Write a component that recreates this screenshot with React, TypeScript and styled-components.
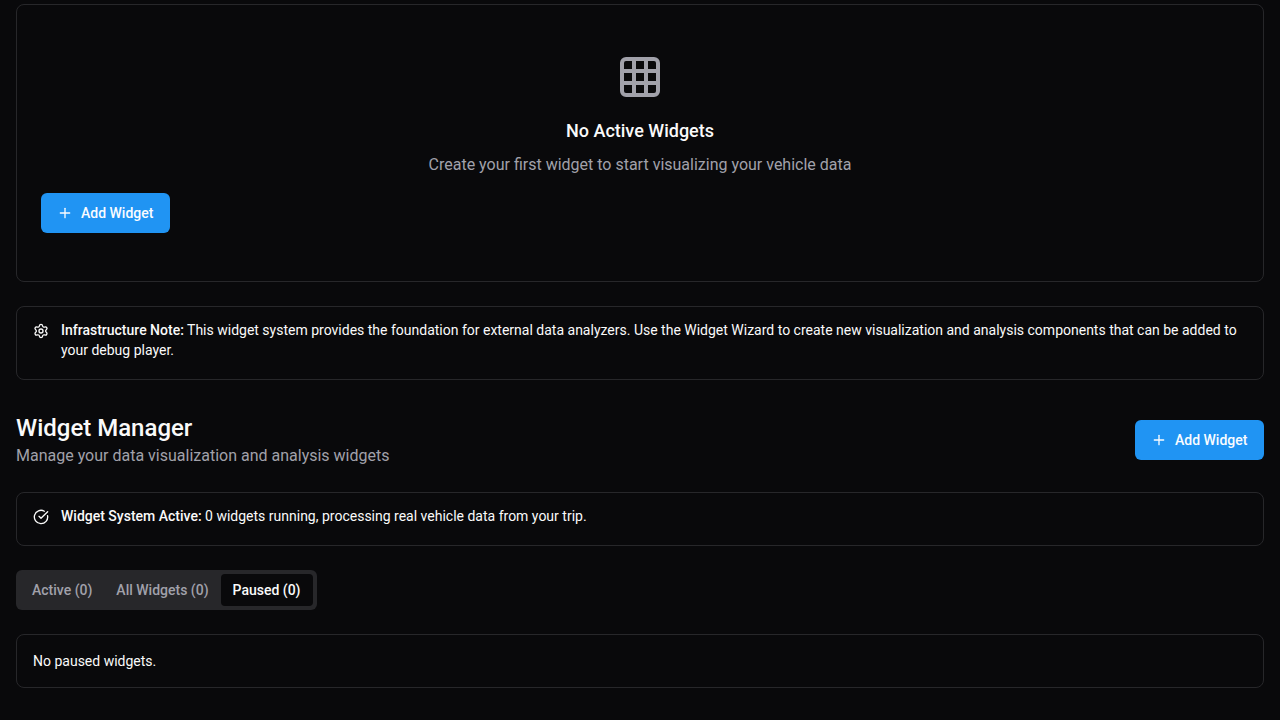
import React, { useState } from "react";
import styled, { createGlobalStyle } from "styled-components";
import { CircleCheckBig, Grid3x3, Plus, Settings } from "lucide-react";

const GlobalStyle = createGlobalStyle`
  *, *::before, *::after { box-sizing: border-box; }
  body {
    margin: 0;
    background: #09090b;
    color: #fafafa;
    font-family: Roboto, "Liberation Sans", sans-serif;
    font-size: 16px;
    line-height: 24px;
  }
  h2, h3, p { margin: 0; }
  button { font: inherit; }
`;

const Page = styled.main`
  display: flex;
  flex-direction: column;
  gap: 32px;
  padding: 4px 16px 32px;
`;

const Section = styled.section`
  display: flex;
  flex-direction: column;
  gap: 24px;
`;

const EmptyCard = styled.div`
  display: flex;
  flex-direction: column;
  align-items: center;
  padding: 48px 24px;
  border: 1px solid #27272a;
  border-radius: 8px;
`;

const EmptyIcon = styled(Grid3x3)`
  color: #a1a1aa;
  margin-bottom: 16px;
`;

const EmptyTitle = styled.h3`
  font-size: 18px;
  line-height: 28px;
  font-weight: 500;
  margin-bottom: 8px;
`;

const Muted = styled.p`
  color: #a1a1aa;
`;

const EmptyActions = styled.div`
  align-self: flex-start;
  margin-top: 16px;
`;

const PrimaryButton = styled.button`
  display: inline-flex;
  align-items: center;
  gap: 8px;
  height: 40px;
  min-width: 129px;
  padding: 0 16px;
  border: 0;
  border-radius: 6px;
  background: #2094f3;
  color: #fafcff;
  font-size: 14px;
  line-height: 20px;
  font-weight: 500;
  white-space: nowrap;
  cursor: pointer;
`;

const Alert = styled.div<{ $withIcon?: boolean }>`
  display: flex;
  gap: 12px;
  padding: ${({ $withIcon }) => ($withIcon ? "13px 16px 19px" : "16px")};
  border: 1px solid #27272a;
  border-radius: 8px;
  font-size: 14px;
  line-height: 20px;

  svg {
    flex: none;
    margin-top: 3px;
  }
`;

const Strong = styled.strong`
  font-weight: 500;
`;

const Header = styled.header`
  display: flex;
  align-items: center;
  justify-content: space-between;
  gap: 16px;
`;

const Title = styled.h2`
  font-size: 24px;
  line-height: 32px;
  font-weight: 500;
`;

const TabList = styled.div`
  display: flex;
  align-self: flex-start;
  padding: 4px;
  border-radius: 6px;
  background: #27272a;
`;

const Tab = styled.button<{ $active: boolean }>`
  padding: 6px 12px;
  border: 0;
  border-radius: 4px;
  background: ${({ $active }) => ($active ? "#09090b" : "transparent")};
  color: ${({ $active }) => ($active ? "#fafafa" : "#a1a1aa")};
  font-size: 14px;
  line-height: 20px;
  font-weight: 500;
  white-space: nowrap;
  cursor: pointer;
`;

const tabs = [
  { id: "active", label: "Active (0)", empty: "No active widgets." },
  { id: "all", label: "All Widgets (0)", empty: "No widgets." },
  { id: "paused", label: "Paused (0)", empty: "No paused widgets." },
];

function AddWidgetButton() {
  return (
    <PrimaryButton type="button">
      <Plus size={16} aria-hidden />
      Add Widget
    </PrimaryButton>
  );
}

export default function App() {
  const [selected, setSelected] = useState("paused");
  const current = tabs.find((tab) => tab.id === selected) ?? tabs[0];

  return (
    <>
      <GlobalStyle />
      <Page>
        <Section>
          <EmptyCard>
            <EmptyIcon size={48} aria-hidden />
            <EmptyTitle>No Active Widgets</EmptyTitle>
            <Muted>Create your first widget to start visualizing your vehicle data</Muted>
            <EmptyActions>
              <AddWidgetButton />
            </EmptyActions>
          </EmptyCard>
          <Alert $withIcon role="note">
            <Settings size={16} aria-hidden />
            <p>
              <Strong>Infrastructure Note:</Strong> This widget system provides the foundation for
              external data analyzers. Use the Widget Wizard to create new visualization and analysis
              components that can be added to your debug player.
            </p>
          </Alert>
        </Section>

        <Section>
          <Header>
            <div>
              <Title>Widget Manager</Title>
              <Muted>Manage your data visualization and analysis widgets</Muted>
            </div>
            <AddWidgetButton />
          </Header>
          <Alert $withIcon role="status">
            <CircleCheckBig size={16} aria-hidden />
            <p>
              <Strong>Widget System Active:</Strong> 0 widgets running, processing real vehicle data
              from your trip.
            </p>
          </Alert>
          <TabList role="tablist" aria-label="Widgets">
            {tabs.map((tab) => (
              <Tab
                key={tab.id}
                type="button"
                role="tab"
                id={`tab-${tab.id}`}
                aria-selected={tab.id === selected}
                aria-controls="widget-panel"
                $active={tab.id === selected}
                onClick={() => setSelected(tab.id)}
              >
                {tab.label}
              </Tab>
            ))}
          </TabList>
          <Alert role="tabpanel" id="widget-panel" aria-labelledby={`tab-${current.id}`}>
            <p>{current.empty}</p>
          </Alert>
        </Section>
      </Page>
    </>
  );
}
